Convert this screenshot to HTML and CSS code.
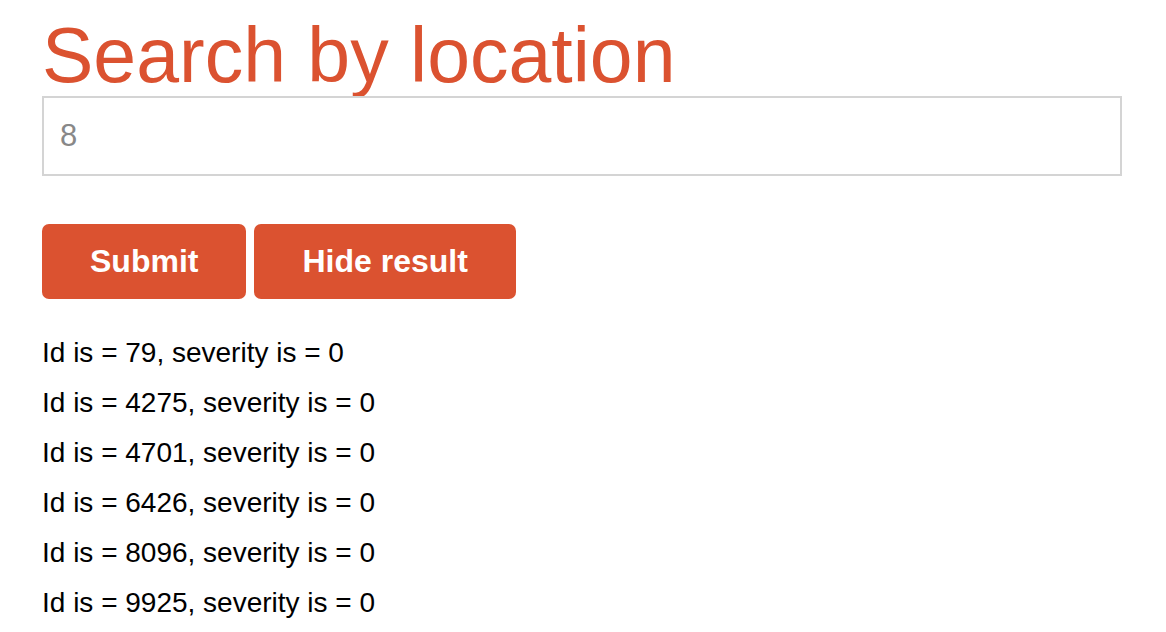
FILE: index.html
```html
<!DOCTYPE html>
<html lang="en">
<head>
<meta charset="utf-8">
<title>Search by location</title>
<link rel="stylesheet" href="styles.css">
</head>
<body>
<main class="page">
  <h1 class="title">Search by location</h1>
  <input class="search-input" type="text" value="8">
  <div class="actions">
    <button class="btn" type="button">Submit</button>
    <button class="btn" type="button">Hide result</button>
  </div>
  <ul class="results">
    <li>Id is = 79, severity is = 0</li>
    <li>Id is = 4275, severity is = 0</li>
    <li>Id is = 4701, severity is = 0</li>
    <li>Id is = 6426, severity is = 0</li>
    <li>Id is = 8096, severity is = 0</li>
    <li>Id is = 9925, severity is = 0</li>
  </ul>
</main>
</body>
</html>
```

FILE: styles.css
```css
html, body {
  margin: 0;
  padding: 0;
  background: #fff;
}

body {
  font-family: "Liberation Sans", Arial, Helvetica, sans-serif;
  color: #000;
}

.page {
  padding: 14px 44px 0 42px;
  display: flex;
  flex-direction: column;
  align-items: flex-start;
}

.title {
  margin: 0;
  font-size: 77px;
  line-height: 82px;
  font-weight: 400;
  color: #db5230;
}

.search-input {
  box-sizing: border-box;
  width: 100%;
  height: 80px;
  margin: 0;
  padding: 0 16px;
  border: 2px solid #d4d4d4;
  border-radius: 0;
  outline: none;
  font-family: inherit;
  font-size: 31px;
  color: #888;
  background: #fff;
}

.actions {
  display: flex;
  gap: 8px;
  margin-top: 48px;
}

.btn {
  height: 75px;
  padding: 0 48px;
  border: none;
  border-radius: 7px;
  background: #db5230;
  color: #fff;
  font-family: inherit;
  font-size: 32px;
  font-weight: 700;
  cursor: pointer;
}

.results {
  list-style: none;
  margin: 29px 0 0;
  padding: 0;
  font-size: 28px;
  line-height: 50px;
}
```
